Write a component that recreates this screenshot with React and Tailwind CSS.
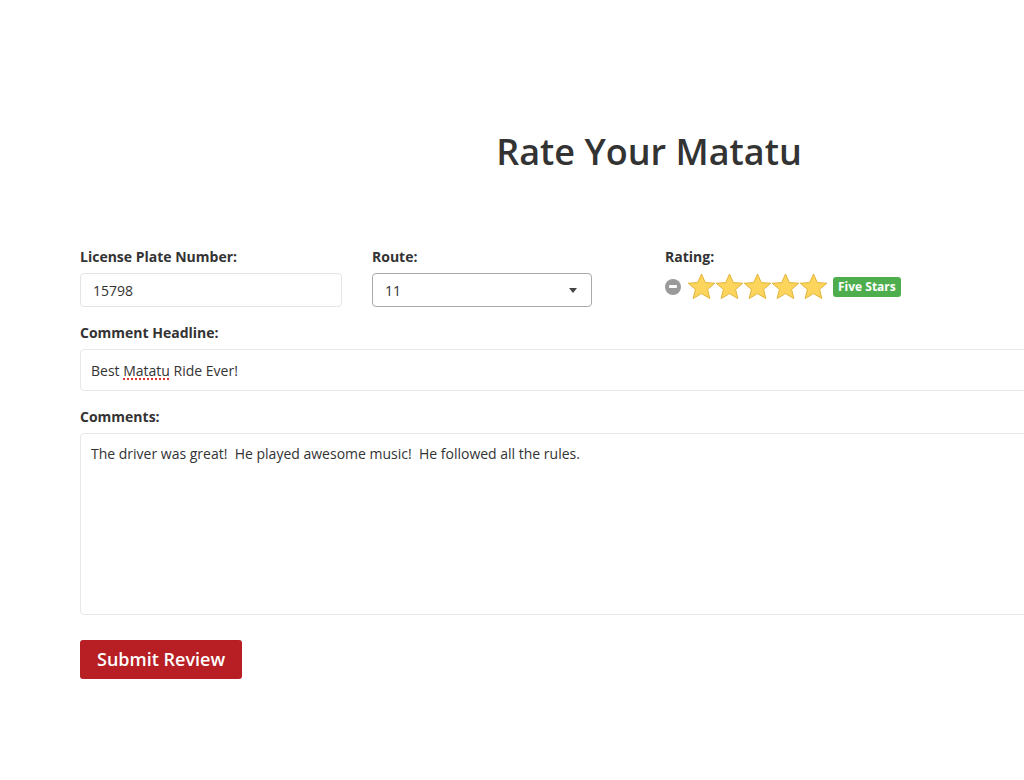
import { useState } from 'react'

function Star() {
  return (
    <svg width="29" height="27" viewBox="0 0 29 27">
      <polygon
        points="14.5,1 18.3,9.6 27.8,10.2 20.6,16.4 22.9,25.6 14.5,20.6 6.1,25.6 8.4,16.4 1.2,10.2 10.7,9.6"
        fill="#fdd45c"
        stroke="#e2b53c"
        strokeWidth="1"
        strokeLinejoin="round"
      />
    </svg>
  )
}

function Label({ children }) {
  return <div className="text-[14px] font-bold text-[#333] leading-5 mb-[6px]">{children}</div>
}

export default function App() {
  const [plate, setPlate] = useState('15798')
  return (
    <div className="w-[1024px] h-[780px] overflow-hidden bg-white text-[#333]" style={{ fontFamily: '"Open Sans", "Liberation Sans", sans-serif' }}>
      <div className="ml-[80px] w-[1138px]">
        <h1 className="pt-[128px] text-center text-[36px] font-semibold leading-[48px] text-[#333]">Rate Your Matatu</h1>

        <div className="mt-[71px] flex">
          <div className="w-[292px]">
            <Label>License Plate Number:</Label>
            <input
              value={plate}
              onChange={(e) => setPlate(e.target.value)}
              className="w-[262px] h-[34px] px-[12px] border border-[#e4e4e4] rounded-[4px] text-[14px] text-[#333] outline-none"
            />
          </div>
          <div className="w-[293px]">
            <Label>Route:</Label>
            <div className="w-[220px] h-[34px] pl-[12px] pr-[14px] border border-[#aaa] rounded-[4px] flex items-center justify-between text-[14px]">
              <span>11</span>
              <span className="w-0 h-0 border-l-[4px] border-r-[4px] border-t-[5px] border-l-transparent border-r-transparent border-t-[#444]" />
            </div>
          </div>
          <div>
            <Label>Rating:</Label>
            <div className="flex items-center h-[27px] mt-[2px]">
              <span className="w-[16px] h-[16px] rounded-full bg-[#9a9a9a] flex items-center justify-center mr-[6px]">
                <span className="w-[8px] h-[3px] bg-white rounded-[1px]" />
              </span>
              <div className="flex -space-x-[1px]">
                <Star /><Star /><Star /><Star /><Star />
              </div>
              <span className="ml-[5px] mt-[1px] bg-[#4eae4e] text-white text-[12px] font-bold leading-[20px] px-[5px] rounded-[3px]">Five Stars</span>
            </div>
          </div>
        </div>

        <div className="mt-[16px]">
          <Label>Comment Headline:</Label>
          <div className="h-[42px] px-[10px] border border-[#e8e8e8] rounded-[4px] flex items-center text-[14px]">
            Best&nbsp;<span className="underline decoration-dotted decoration-[#d33] decoration-2 underline-offset-[3px]">Matatu</span>&nbsp;Ride Ever!
          </div>
        </div>

        <div className="mt-[16px]">
          <Label>Comments:</Label>
          <div className="h-[182px] px-[10px] pt-[9px] border border-[#e8e8e8] rounded-[4px] text-[14px] whitespace-pre">
            The driver was great!  He played awesome music!  He followed all the rules.
          </div>
        </div>

        <button className="mt-[25px] h-[39px] px-[17px] bg-[#b71f24] text-white text-[18px] font-semibold rounded-[3px]">Submit Review</button>
      </div>
    </div>
  )
}
